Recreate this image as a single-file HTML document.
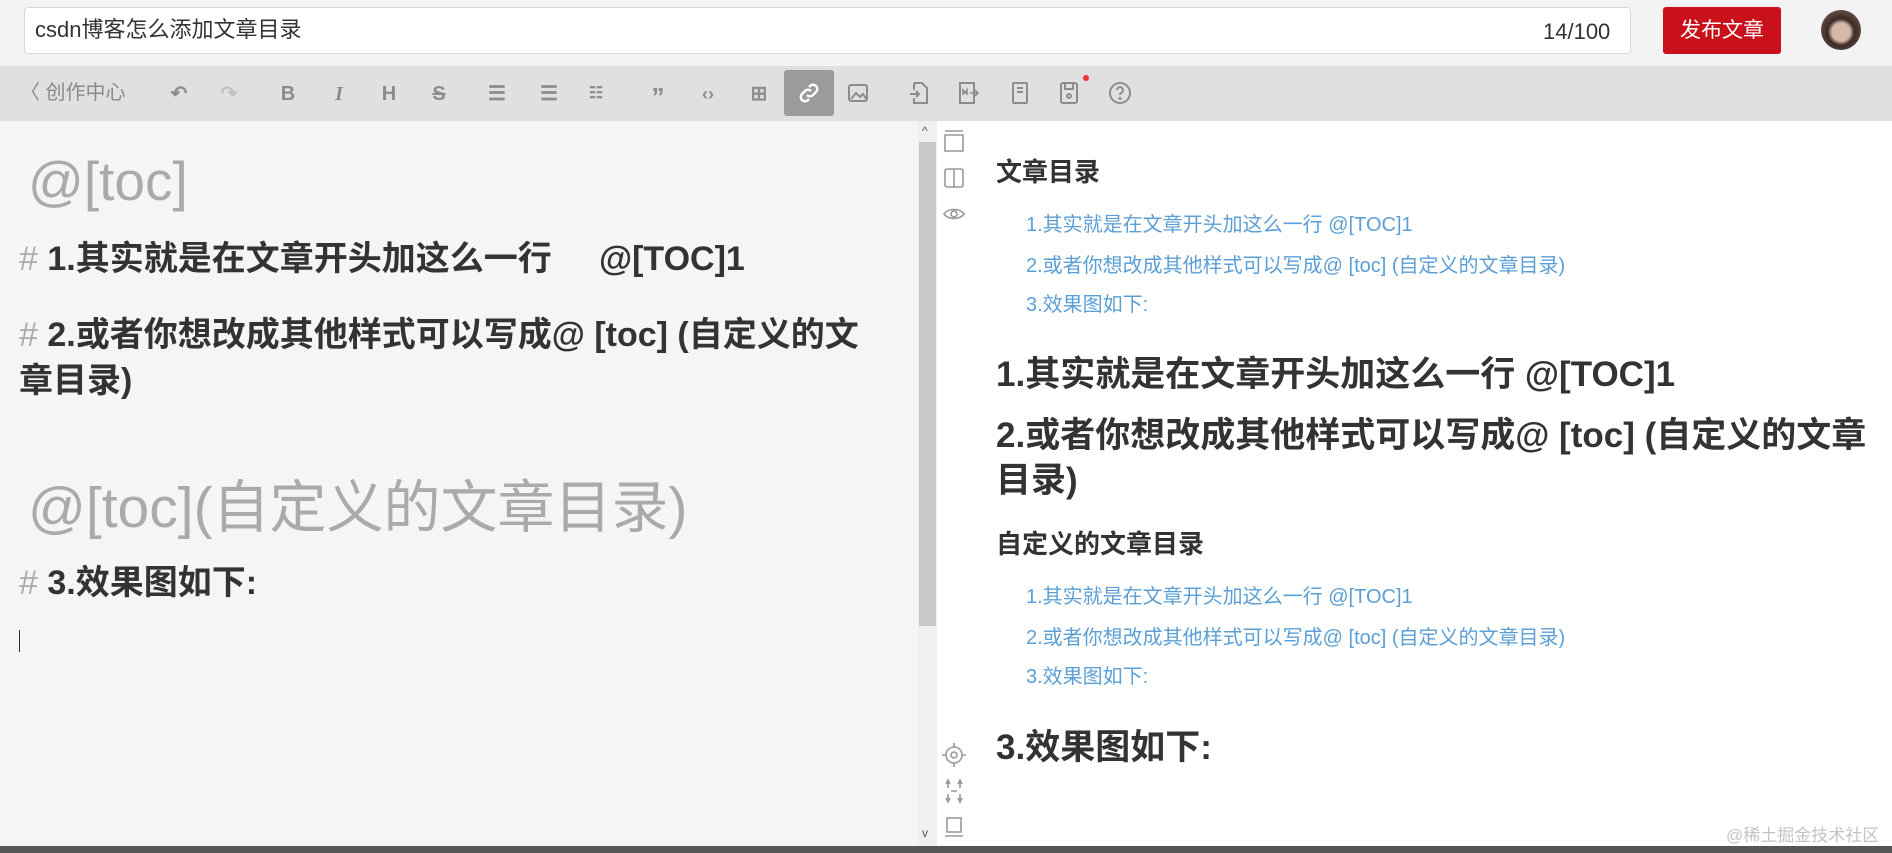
<!DOCTYPE html>
<html><head><meta charset="utf-8"><style>
*{margin:0;padding:0;box-sizing:border-box}
body{width:1892px;height:853px;overflow:hidden;background:#f3f3f3;font-family:"Liberation Sans","Noto Sans CJK SC",sans-serif;position:relative}
.a{position:absolute;white-space:nowrap}
.c{line-height:1}
.ic{position:absolute;top:82px;color:#8c8c8c;font-size:20px;font-weight:bold;width:30px;text-align:center;line-height:24px}
svg{display:block}
.l{color:#5b9fd6;font-size:20px;left:1026px}
.h{color:#333;font-weight:bold}
.g{color:#aaa}
</style></head><body>
<div class="a" style="left:24px;top:7px;width:1607px;height:47px;background:#fff;border:1px solid #d8d8d8;border-radius:4px"></div>
<div class="a" style="left:35px;top:16px;font-size:22px;color:#333;line-height:28px">csdn博客怎么添加文章目录</div>
<div class="a" style="left:1543px;top:18px;font-size:22px;color:#333;line-height:28px">14/100</div>
<div class="a" style="left:1663px;top:7px;width:118px;height:47px;background:#c9101b;border-radius:3px;color:#fff;font-size:21px;line-height:47px;text-align:center">发布文章</div>
<div class="a" style="left:1821px;top:10px;width:40px;height:40px;border-radius:50%;background:radial-gradient(circle at 50% 55%,#d8b8a8 0 30%,#3a2a26 45%,#8a6a60 100%)"></div>

<div class="a" style="left:0;top:66px;width:1892px;height:55px;background:#e0e0e0"></div>
<div class="a" style="left:20px;top:81px;font-size:20px;color:#8a8a8a;line-height:24px">〈 创作中心</div>
<div class="ic" style="left:164px">↶</div>
<div class="ic" style="left:214px;color:#c0c0c0">↷</div>
<div class="ic" style="left:273px">B</div>
<div class="ic" style="left:324px;font-style:italic;font-family:'Liberation Serif',serif">I</div>
<div class="ic" style="left:374px">H</div>
<div class="ic" style="left:424px;text-decoration:line-through">S</div>
<div class="ic" style="left:482px">☰</div>
<div class="ic" style="left:534px">☰</div>
<div class="ic" style="left:581px;font-size:16px">☷</div>
<div class="ic" style="left:643px;font-size:26px;line-height:30px">”</div>
<div class="ic" style="left:693px;font-size:18px">‹›</div>
<div class="ic" style="left:744px">⊞</div>
<div class="a" style="left:784px;top:70px;width:50px;height:46px;background:#9b9b9b;border-radius:3px"></div>
<svg class="a" style="left:797px;top:81px" width="24" height="24" viewBox="0 0 24 24" fill="none" stroke="#fff" stroke-width="2.4"><path d="M10 14a4 4 0 0 0 6 0l3-3a4 4 0 0 0-6-6l-1 1M14 10a4 4 0 0 0-6 0l-3 3a4 4 0 0 0 6 6l1-1"/></svg>
<svg class="a" style="left:847px;top:83px" width="22" height="20" viewBox="0 0 22 20" fill="none" stroke="#8c8c8c" stroke-width="2"><rect x="2" y="2" width="18" height="16" rx="2"/><path d="M4 16l5-6 4 4 3-3 3 5"/></svg>
<svg class="a" style="left:908px;top:80px" width="22" height="26" viewBox="0 0 22 26" fill="none" stroke="#8c8c8c" stroke-width="2"><path d="M6 3h8l5 5v15H6v-5M6 10V3M2 14h9M8 11l3 3-3 3"/></svg>
<svg class="a" style="left:957px;top:80px" width="24" height="26" viewBox="0 0 24 26" fill="none" stroke="#8c8c8c" stroke-width="2"><path d="M3 3h14v20H3z"/><path d="M6 15v-5l2 3 2-3v5M13 13h8M18 10l3 3-3 3" stroke-width="1.6"/></svg>
<svg class="a" style="left:1010px;top:80px" width="20" height="26" viewBox="0 0 20 26" fill="none" stroke="#8c8c8c" stroke-width="2"><rect x="3" y="3" width="14" height="20" rx="1"/><path d="M7 8h6M7 12h6"/></svg>
<svg class="a" style="left:1058px;top:80px" width="22" height="26" viewBox="0 0 22 26" fill="none" stroke="#8c8c8c" stroke-width="2"><rect x="3" y="3" width="16" height="20" rx="2"/><path d="M7 3v6h8V3"/><circle cx="11" cy="16" r="2"/></svg>
<div class="a" style="left:1083px;top:75px;width:6px;height:6px;border-radius:50%;background:#e33"></div>
<svg class="a" style="left:1108px;top:81px" width="24" height="24" viewBox="0 0 24 24" fill="none" stroke="#8c8c8c" stroke-width="2"><circle cx="12" cy="12" r="10"/><path d="M9 9a3 3 0 1 1 4 3c-1 .5-1 1-1 2"/><circle cx="12" cy="17.5" r=".6"/></svg>

<div class="a" style="left:0;top:121px;width:918px;height:725px;background:#f5f5f5"></div>
<div class="a" style="left:918px;top:121px;width:19px;height:725px;background:#f0f0f0"></div>
<div class="a" style="left:919px;top:142px;width:17px;height:484px;background:#c8c8c8"></div>
<div class="a" style="left:922px;top:124px;font-size:12px;color:#555">^</div>
<div class="a" style="left:922px;top:826px;font-size:12px;color:#555">v</div>
<div class="a" style="left:937px;top:121px;width:955px;height:725px;background:#fff"></div>
<div class="a" style="left:0;top:846px;width:1892px;height:7px;background:#555"></div>

<div class="a c g" style="left:28px;top:154px;font-size:55px">@[toc]</div>
<div class="a c h" style="left:19px;top:242px;font-size:34px"><span class="g" style="font-weight:normal">#</span> 1.其实就是在文章开头加这么一行&nbsp;&nbsp;&nbsp;&nbsp; @[TOC]1</div>
<div class="a c h" style="left:19px;top:318px;font-size:34px"><span class="g" style="font-weight:normal">#</span> 2.或者你想改成其他样式可以写成@ [toc] (自定义的文</div>
<div class="a c h" style="left:19px;top:364px;font-size:34px">章目录)</div>
<div class="a c g" style="left:28px;top:480px;font-size:57px">@[toc](自定义的文章目录)</div>
<div class="a c h" style="left:19px;top:566px;font-size:34px"><span class="g" style="font-weight:normal">#</span> 3.效果图如下:</div>
<div class="a" style="left:19px;top:630px;width:1px;height:22px;background:#333"></div>

<svg class="a" style="left:942px;top:129px" width="24" height="130" viewBox="0 0 24 130" fill="none" stroke="#999" stroke-width="1.6"><path d="M3 2h18M3 6h18v16H3z"/><rect x="3" y="40" width="18" height="18" rx="2"/><path d="M12 40v18"/><path d="M2 85c4-6 16-6 20 0c-4 6-16 6-20 0z"/><circle cx="12" cy="85" r="3"/></svg>
<svg class="a" style="left:942px;top:740px" width="24" height="100" viewBox="0 0 24 100" fill="none" stroke="#999" stroke-width="1.6"><circle cx="12" cy="15" r="8"/><circle cx="12" cy="15" r="3"/><path d="M12 3v4M12 23v4M0 15h4M20 15h4"/><path d="M6 40v8M18 40v8M4 44l2-4 2 4M16 44l2-4 2 4M9 51h6M6 54v8M18 54v8M4 58l2 4 2-4M16 58l2 4 2-4"/><rect x="5" y="78" width="14" height="14"/><path d="M3 96h18"/></svg>

<div class="a c h" style="left:996px;top:159px;font-size:26px">文章目录</div>
<div class="a c l" style="top:215px">1.其实就是在文章开头加这么一行 @[TOC]1</div>
<div class="a c l" style="top:256px">2.或者你想改成其他样式可以写成@ [toc] (自定义的文章目录)</div>
<div class="a c l" style="top:295px">3.效果图如下:</div>
<div class="a c h" style="left:996px;top:357px;font-size:35px">1.其实就是在文章开头加这么一行 @[TOC]1</div>
<div class="a c h" style="left:996px;top:418px;font-size:35px">2.或者你想改成其他样式可以写成@ [toc] (自定义的文章</div>
<div class="a c h" style="left:996px;top:463px;font-size:35px">目录)</div>
<div class="a c h" style="left:996px;top:531px;font-size:26px">自定义的文章目录</div>
<div class="a c l" style="top:587px">1.其实就是在文章开头加这么一行 @[TOC]1</div>
<div class="a c l" style="top:628px">2.或者你想改成其他样式可以写成@ [toc] (自定义的文章目录)</div>
<div class="a c l" style="top:667px">3.效果图如下:</div>
<div class="a c h" style="left:996px;top:730px;font-size:35px">3.效果图如下:</div>
<div class="a c" style="left:1726px;top:827px;font-size:17px;color:#c4c4c4">@稀土掘金技术社区</div>
</body></html>
